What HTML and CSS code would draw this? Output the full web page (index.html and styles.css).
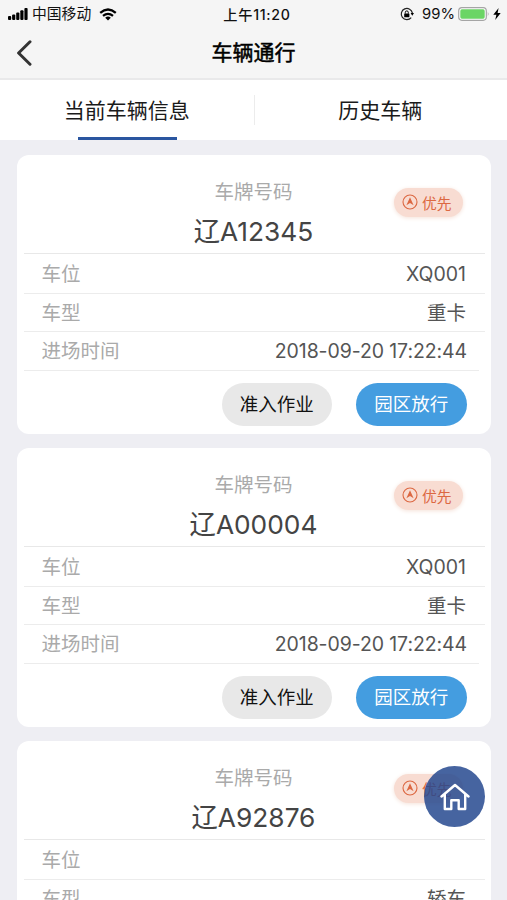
FILE: index.html
```
<!DOCTYPE html>
<html lang="zh-CN">
<head>
    <meta charset="UTF-8">
    <meta name="viewport" content="width=device-width, initial-scale=1.0">
    <title>车辆通行</title>
    <link rel="stylesheet" href="styles.css">
</head>
<body>
    <svg width="0" height="0" class="defs">
        <symbol id="icon-up" viewBox="0 0 16 16">
            <circle cx="8" cy="8" r="7" fill="none" stroke="currentColor" stroke-width="1.1"/>
            <path d="M8 3.2 L11.6 11.3 L8 8.9 L4.4 11.3 Z" fill="currentColor"/>
        </symbol>
    </svg>

    <header>
        <div class="status">
            <div class="status-left">
                <svg class="signal" viewBox="0 0 20 12" width="20" height="12">
                    <rect x="0" y="8" width="3.2" height="4" rx="1"/>
                    <rect x="4.1" y="6.5" width="3.2" height="5.5" rx="1"/>
                    <rect x="8.2" y="4.5" width="3.2" height="7.5" rx="1"/>
                    <rect x="12.3" y="2.3" width="3.2" height="9.7" rx="1"/>
                    <rect x="16.4" y="0" width="3.2" height="12" rx="1"/>
                </svg>
                <span class="carrier">中国移动</span>
                <svg class="wifi" viewBox="0 0 18 13" width="18" height="13">
                    <path d="M1.2 4.8 Q9 -1.9 16.8 4.8" fill="none" stroke="#000" stroke-width="2.3"/>
                    <path d="M4 7.9 Q9 3.7 14 7.9" fill="none" stroke="#000" stroke-width="2.2"/>
                    <path d="M6.2 9.7 Q9 7.4 11.8 9.7 L9 12.6 Z"/>
                </svg>
            </div>
            <div class="clock">上午11:20</div>
            <div class="status-right">
                <svg class="lock" viewBox="0 0 14 14" width="14" height="14">
                    <path d="M11.2 10.6 A5.6 5.6 0 1 1 12.4 6.2" fill="none" stroke="#222" stroke-width="1.2"/>
                    <path d="M10.6 6 L14 6 L12.3 8.8 Z"/>
                    <rect x="4.2" y="6.4" width="5.2" height="3.8" rx="0.5"/>
                    <path d="M5.3 6.6 V5.4 a1.5 1.5 0 0 1 3 0 V6.6" fill="none" stroke="#000" stroke-width="1"/>
                </svg>
                <span class="percent">99%</span>
                <svg class="battery" viewBox="0 0 32 14" width="32" height="14">
                    <rect x="0.7" y="0.7" width="27.6" height="12.6" rx="3.2" fill="#fff" stroke="#a5a5a5" stroke-width="1.2"/>
                    <rect x="2.3" y="2.3" width="24.4" height="9.4" rx="1.6" fill="#6bd565"/>
                    <path d="M29.8 4.8 Q31.4 7 29.8 9.2 Z" fill="#a5a5a5"/>
                </svg>
                <svg class="bolt" viewBox="0 0 8 12" width="8" height="12">
                    <path d="M5.6 0 L0.3 6.8 H3.4 L2.2 12 L7.7 4.9 H4.6 Z"/>
                </svg>
            </div>
        </div>
        <div class="nav">
            <svg class="back" viewBox="0 0 16 26" width="16" height="26">
                <path d="M14 1.8 L2.6 13 L14 24.2" fill="none" stroke="#333" stroke-width="3" stroke-linecap="round" stroke-linejoin="round"/>
            </svg>
            <h1>车辆通行</h1>
        </div>
    </header>

    <div class="tabs">
        <div class="tab active"><span>当前车辆信息</span></div>
        <div class="tab"><span>历史车辆</span></div>
    </div>

    <main>
        <div class="card">
            <div class="plate">
                <div class="plate-label">车牌号码</div>
                <div class="plate-no">辽A12345</div>
                <div class="tag"><svg width="16" height="16"><use href="#icon-up"/></svg>优先</div>
            </div>
            <div class="row"><label>车位</label><span>XQ001</span></div>
            <div class="row"><label>车型</label><span>重卡</span></div>
            <div class="row last"><label>进场时间</label><span class="time">2018-09-20 17:22:44</span></div>
            <div class="actions">
                <button>准入作业</button>
                <button class="primary">园区放行</button>
            </div>
        </div>
        <div class="card">
            <div class="plate">
                <div class="plate-label">车牌号码</div>
                <div class="plate-no">辽A00004</div>
                <div class="tag"><svg width="16" height="16"><use href="#icon-up"/></svg>优先</div>
            </div>
            <div class="row"><label>车位</label><span>XQ001</span></div>
            <div class="row"><label>车型</label><span>重卡</span></div>
            <div class="row last"><label>进场时间</label><span class="time">2018-09-20 17:22:44</span></div>
            <div class="actions">
                <button>准入作业</button>
                <button class="primary">园区放行</button>
            </div>
        </div>
        <div class="card">
            <div class="plate">
                <div class="plate-label">车牌号码</div>
                <div class="plate-no">辽A92876</div>
                <div class="tag"><svg width="16" height="16"><use href="#icon-up"/></svg>优先</div>
            </div>
            <div class="row"><label>车位</label><span></span></div>
            <div class="row"><label>车型</label><span>轿车</span></div>
        </div>
    </main>

    <div class="home">
        <svg viewBox="0 0 30 28" width="30" height="28">
            <path d="M1.5 13.5 L15 2 L28.5 13.5 M4.8 11.5 V26 H11.3 V17.2 H18.7 V26 H25.2 V11.5" fill="none" stroke="#fff" stroke-width="2.4" stroke-linecap="round" stroke-linejoin="round"/>
        </svg>
    </div>
</body>
</html>
```
FILE: styles.css
```
* {
    box-sizing: border-box;
}
body, html {
    margin: 0;
    padding: 0;
    height: 900px;
    overflow: hidden;
    font-family: Inter, "Noto Sans CJK SC", sans-serif;
    background-color: #eeeef3;
}
.defs {
    position: absolute;
}
svg {
    flex: none;
}
header {
    height: 80px;
    background-color: #f5f5f5;
    border-bottom: 2px solid #e9e9ea;
}
.status {
    display: grid;
    grid-template-columns: 1fr auto 1fr;
    align-items: center;
    height: 27px;
    padding: 0 6px 0 8px;
    font-size: 14.8px;
    line-height: 27px;
    color: #111;
}
.status-left, .status-right {
    display: flex;
    align-items: center;
}
.status-right {
    justify-content: flex-end;
}
.carrier {
    margin: 0 8px 0 4px;
    padding-top: 1px;
}
.clock {
    padding-left: 5px;
    font-size: 14.2px;
    font-weight: 500;
    letter-spacing: 0.7px;
}
.percent {
    margin: 0 3px 0 8px;
}
.bolt {
    margin-left: 3px;
}
.nav {
    display: grid;
    grid-template-columns: 60px 1fr 60px;
    align-items: center;
    height: 51px;
}
.back {
    margin-left: 16px;
}
h1 {
    margin: 0;
    padding-top: 1px;
    font-size: 21px;
    font-weight: 400;
    line-height: 30px;
    text-align: center;
    color: #000;
    -webkit-text-stroke: 0.5px #000;
}
.tabs {
    display: flex;
    height: 60px;
    background-color: #fff;
}
.tab {
    flex: 1;
    display: flex;
    flex-direction: column;
    align-items: center;
    padding-top: 15px;
    font-size: 21px;
    line-height: 31px;
    color: #1a1a1a;
}
.tab + .tab {
    background: linear-gradient(#ececec, #ececec) no-repeat 0 15px / 1px 30px;
}
.tab.active::after {
    content: "";
    width: 99px;
    height: 3px;
    margin: 11px 0 0 1px;
    background-color: #2a56a0;
}
main {
    display: flex;
    flex-direction: column;
    gap: 14.5px;
    padding: 15px 16px 0 17px;
}
.card {
    flex: none;
    height: 278.5px;
    padding: 0 6px 0 7px;
    border-radius: 12px;
    background-color: #fff;
}
.plate {
    position: relative;
    height: 99px;
    padding-top: 23px;
    border-bottom: 1px solid #e8e8e8;
    text-align: center;
}
.plate-label {
    padding-right: 2px;
    font-size: 19.5px;
    line-height: 28px;
    color: #aaa;
}
.plate-no {
    padding: 7px 2px 0 0;
    font-size: 26.3px;
    line-height: 38px;
    color: #444;
}
.tag {
    position: absolute;
    top: 33px;
    right: 22px;
    display: flex;
    align-items: center;
    gap: 4px;
    width: 69px;
    height: 29px;
    padding: 0 0 1px 8px;
    border-radius: 15px;
    background-color: #f8dcd2;
    box-shadow: 0 1px 4px #f5e2d9;
    font-size: 14.8px;
    color: #dc6842;
}
.row {
    display: flex;
    justify-content: space-between;
    align-items: center;
    height: 38px;
    padding: 0 19px 0 17.5px;
    border-bottom: 1px solid #ececec;
    font-size: 19.5px;
    line-height: 28px;
    color: #555;
}
.plate + .row {
    height: 40px;
}
.row label {
    color: #aaa;
}
.row.last {
    height: 38.5px;
    margin-right: 6px;
    padding-right: 12px;
}
.time {
    letter-spacing: -0.1px;
}
.actions {
    display: flex;
    justify-content: flex-end;
    gap: 24px;
    padding: 12px 18.5px 0 0;
}
button {
    width: 110.5px;
    height: 43px;
    padding: 0 0 2px;
    border: none;
    border-radius: 22px;
    background-color: #e8e8e8;
    font-family: inherit;
    font-size: 18.5px;
    color: #111;
}
button.primary {
    background-color: #449de0;
    color: #fff;
}
.home {
    position: fixed;
    left: 424px;
    top: 766px;
    display: flex;
    align-items: center;
    justify-content: center;
    width: 61px;
    height: 61px;
    border-radius: 50%;
    background-color: rgba(35, 70, 142, 0.84);
}
```
